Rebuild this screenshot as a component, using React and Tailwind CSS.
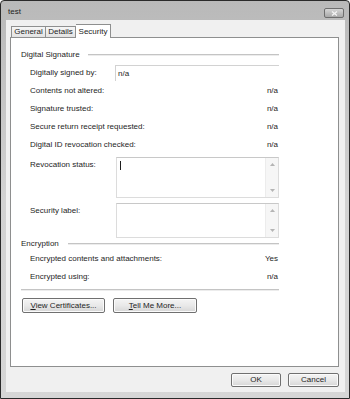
import React from 'react';

const font = { fontFamily: '"Liberation Sans", Arial, sans-serif' };

const SectionHeader = ({ title, lineStart }) => (
  <div className="flex items-center h-[12px]">
    <span className="text-[8px] text-[#1e1e1e] leading-none">{title}</span>
    <div className={`flex-1 flex flex-col ${lineStart}`}>
      <div className="h-px bg-[#c4c4c4]" />
      <div className="h-px bg-[#ececec]" />
    </div>
  </div>
);

const ValueRow = ({ label, value }) => (
  <div className="flex items-center justify-between h-[18px] pl-[9px] text-[8px] text-[#1e1e1e] leading-none">
    <span>{label}</span>
    <span className="pr-[1px]">{value}</span>
  </div>
);

const ScrollArrows = () => (
  <div className="w-[13px] bg-[#f6f6f6] border-l border-[#ececec] flex flex-col justify-between items-center py-[5px]">
    <svg width="5" height="3" viewBox="0 0 5 3">
      <path d="M0 3 L2.5 0 L5 3 Z" fill="#b4b4b4" />
    </svg>
    <svg width="5" height="3" viewBox="0 0 5 3">
      <path d="M0 0 L2.5 3 L5 0 Z" fill="#b4b4b4" />
    </svg>
  </div>
);

const Button = ({ children, className }) => (
  <div
    className={`flex items-center justify-center rounded-[2px] border border-[#707070] bg-gradient-to-b from-[#f4f4f4] via-[#e9e9e9] to-[#d6d6d6] text-[8px] text-[#1e1e1e] leading-none shadow-[inset_0_0_0_1px_#fbfbfb] ${className}`}
  >
    {children}
  </div>
);

export default function App() {
  return (
    <div style={font} className="w-[350px] h-[399px] bg-white">
      <div className="w-[350px] h-[399px] border border-[#2a2a2a] rounded-t-[4px] bg-gradient-to-b from-[#b9b9b9] via-[#d2d2d2] to-[#d6d6d6] flex flex-col pl-[5px] pr-[4px] pb-[6px]">
        {/* title bar */}
        <div className="h-[19px] flex items-start justify-between shrink-0">
          <span className="text-[8px] text-[#1c1c1c] mt-[7px] ml-[2px] leading-none">test</span>
          <div className="mt-[7px] mr-[1px] w-[20px] h-[10px] rounded-[2px] border border-[#6e6e6e] bg-gradient-to-b from-[#d6d6d6] to-[#a9a9a9] flex items-center justify-center">
            <svg width="7" height="5" viewBox="0 0 7 5">
              <path d="M1 0.5 L6 4.5 M6 0.5 L1 4.5" stroke="#f4f4f4" strokeWidth="1.3" />
            </svg>
          </div>
        </div>

        {/* client area */}
        <div className="flex-1 bg-[#f0f0f0] flex flex-col pt-[4px] pl-[4px] pr-[6px]">
          {/* tabs */}
          <div className="flex items-end h-[13px] shrink-0">
            <div className="h-[11px] w-[35px] ml-[1px] border border-b-0 border-[#8e8f8f] bg-gradient-to-b from-[#f6f6f6] to-[#e3e3e3] text-[8px] leading-none flex items-center justify-center text-[#1e1e1e]">
              General
            </div>
            <div className="h-[11px] w-[30px] border border-b-0 border-l-0 border-[#8e8f8f] bg-gradient-to-b from-[#f6f6f6] to-[#e3e3e3] text-[8px] leading-none flex items-center justify-center text-[#1e1e1e]">
              Details
            </div>
            <div className="relative h-[14px] w-[35px] -mb-px z-10 border border-b-0 border-l-0 border-[#8e8f8f] bg-white text-[8px] leading-none flex items-center justify-center text-[#1e1e1e]">
              Security
            </div>
          </div>

          {/* panel */}
          <div className="h-[330px] border border-[#8e8f8f] bg-white pt-[11px] pl-[10px] pr-[59px] flex flex-col shrink-0">
            <SectionHeader title="Digital Signature" lineStart="ml-[8px]" />

            <div className="flex items-center mt-[4px] h-[16px] pl-[9px] text-[8px] text-[#1e1e1e] leading-none">
              <span className="w-[85px]">Digitally signed by:</span>
              <div className="flex-1 h-[16px] border-t border-l border-[#d2d2d2] flex items-center pl-[2px]">
                n/a
              </div>
            </div>

            <div className="mt-[1px]">
              <ValueRow label="Contents not altered:" value="n/a" />
              <ValueRow label="Signature trusted:" value="n/a" />
              <ValueRow label="Secure return receipt requested:" value="n/a" />
              <ValueRow label="Digital ID revocation checked:" value="n/a" />
            </div>

            <div className="flex mt-[3px] pl-[9px] text-[8px] text-[#1e1e1e] leading-none">
              <span className="w-[86px] pt-[4px]">Revocation status:</span>
              <div className="flex-1 h-[41px] border border-[#dcdcdc] border-t-[#c8c8c8] flex">
                <div className="flex-1 pl-[3px] pt-[3px]">
                  <div className="w-px h-[9px] bg-[#1e1e1e]" />
                </div>
                <ScrollArrows />
              </div>
            </div>

            <div className="flex mt-[5px] pl-[9px] text-[8px] text-[#1e1e1e] leading-none">
              <span className="w-[86px] pt-[4px]">Security label:</span>
              <div className="flex-1 h-[35px] border border-[#dcdcdc] border-t-[#c8c8c8] flex">
                <div className="flex-1" />
                <ScrollArrows />
              </div>
            </div>

            <SectionHeader title="Encryption" lineStart="ml-[9px]" />

            <ValueRow label="Encrypted contents and attachments:" value="Yes" />
            <ValueRow label="Encrypted using:" value="n/a" />

            <div className="mt-[3px] flex flex-col">
              <div className="h-px bg-[#c4c4c4]" />
              <div className="h-px bg-[#ececec]" />
            </div>

            <div className="flex gap-[8px] mt-[7px] pl-[1px]">
              <Button className="w-[83px] h-[15px]">
                <span><span className="underline">V</span>iew Certificates...</span>
              </Button>
              <Button className="w-[84px] h-[15px]">
                <span><span className="underline">T</span>ell Me More...</span>
              </Button>
            </div>
          </div>

          {/* dialog buttons */}
          <div className="flex justify-end gap-[7px] mt-[6px]">
            <Button className="w-[50px] h-[14px]">OK</Button>
            <Button className="w-[51px] h-[14px]">Cancel</Button>
          </div>
        </div>
      </div>
    </div>
  );
}
